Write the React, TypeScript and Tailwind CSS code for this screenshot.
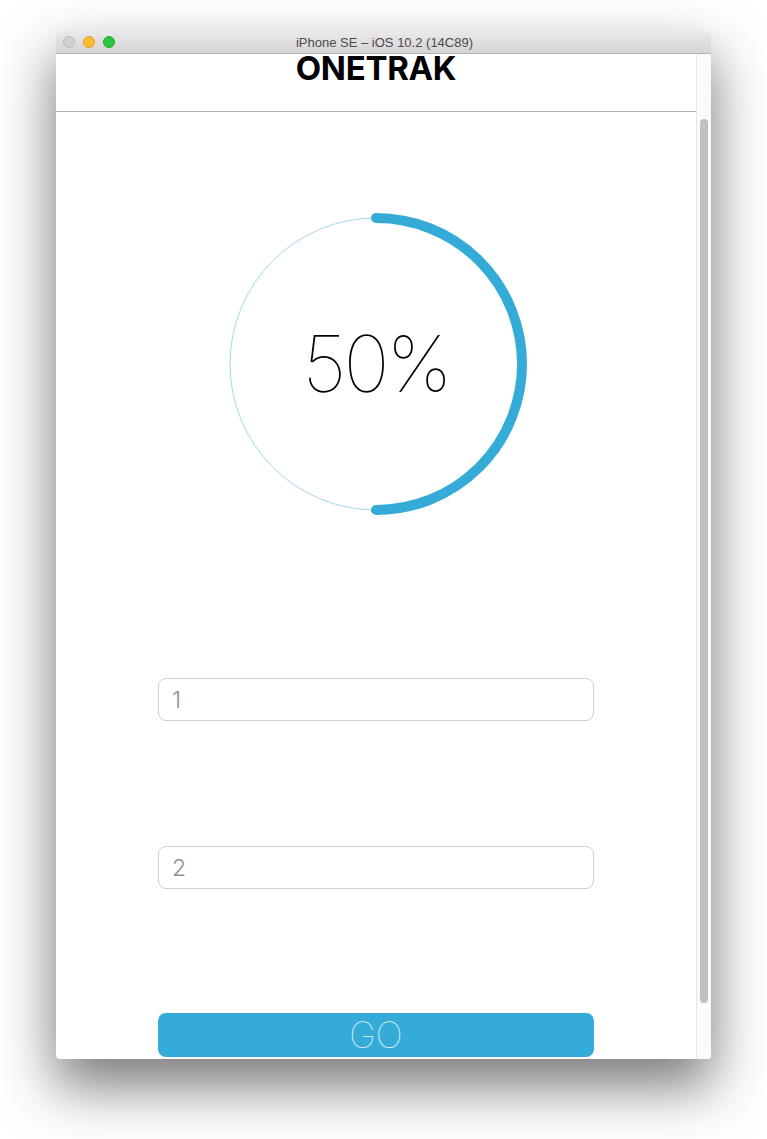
import React from 'react';

const ProgressRing: React.FC<{ percent: number }> = ({ percent }) => {
    const size = 310;
    const c = size / 2;
    const r = 146;
    const angle = (percent / 100) * Math.PI * 2;
    const endX = c + r * Math.sin(angle);
    const endY = c - r * Math.cos(angle);
    const large = percent > 50 ? 1 : 0;

    return (
        <div className="grid place-items-center mt-[97px]">
            <svg width={size} height={size} viewBox={`0 0 ${size} ${size}`} className="col-start-1 row-start-1">
                <circle cx={c} cy={c} r={r} fill="none" stroke="#a3d9ee" strokeWidth={1} />
                <path
                    d={`M ${c} ${c - r} A ${r} ${r} 0 ${large} 1 ${endX.toFixed(2)} ${endY.toFixed(2)}`}
                    fill="none"
                    stroke="#35acd8"
                    strokeWidth={10}
                    strokeLinecap="round"
                />
            </svg>
            <div className="col-start-1 row-start-1 font-['Inter',sans-serif] font-thin text-[78px] leading-none tracking-[-3px] text-black">
                {percent}%
            </div>
        </div>
    );
};

const TrafficLights: React.FC = () => (
    <div className="absolute left-[7px] top-0 h-full flex items-center gap-[8px]">
        <span className="w-[12px] h-[12px] rounded-full bg-[#d1d0d1] border border-[#bcbbbc]" />
        <span className="w-[12px] h-[12px] rounded-full bg-[#fdbc2f] border border-[#dfa023]" />
        <span className="w-[12px] h-[12px] rounded-full bg-[#29c740] border border-[#1ea932]" />
    </div>
);

export default function App() {
    return (
        <div className="w-[767px] h-[1139px] bg-white overflow-hidden pt-[31px] pl-[56px]">
            <div className="w-[655px] h-[1028px] flex flex-col rounded-t-[5px] rounded-b-[4px] overflow-hidden shadow-[0_26px_55px_2px_rgba(0,0,0,0.52)] bg-white">
                {/* title bar */}
                <div className="relative h-[23px] shrink-0 bg-gradient-to-b from-[#ebe9eb] to-[#d5d3d5] border-b border-[#b4b4b4] flex items-center justify-center">
                    <TrafficLights />
                    <span className="font-['Liberation_Sans',sans-serif] text-[13px] text-[#4a4a4a] leading-none pl-[2px]">
                        iPhone SE – iOS 10.2 (14C89)
                    </span>
                </div>

                <div className="flex flex-1 min-h-0">
                    <div className="flex-1 flex flex-col">
                        <header className="h-[58px] border-b border-[#b2b2b2] flex justify-center">
                            <h1 className="font-['Inter',sans-serif] font-bold text-[33px] leading-[28px] tracking-[-0.3px] text-black">
                                ONETRAK
                            </h1>
                        </header>

                        <ProgressRing percent={50} />

                        <div className="w-[436px] mx-auto mt-[159px] flex flex-col">
                            <input
                                placeholder="1"
                                className="h-[43px] rounded-[8px] border border-[#cfcfcf] pl-[13px] font-['Inter',sans-serif] font-light text-[23px] text-[#8f8f8f] placeholder:text-[#8f8f8f] outline-none"
                            />
                            <input
                                placeholder="2"
                                className="mt-[125px] h-[43px] rounded-[8px] border border-[#cfcfcf] pl-[13px] font-['Inter',sans-serif] font-light text-[23px] text-[#8f8f8f] placeholder:text-[#8f8f8f] outline-none"
                            />
                            <button className="mt-[124px] h-[44px] rounded-[8px] bg-[#35acd8] font-['Inter',sans-serif] font-thin text-[36px] leading-none text-white/85">
                                GO
                            </button>
                        </div>
                    </div>

                    {/* scrollbar */}
                    <div className="w-[15px] shrink-0 bg-[#fafafa] border-l border-[#e6e6e6] pt-[65px] pb-[56px] flex justify-center">
                        <div className="w-[8px] h-full rounded-full bg-[#c1c1c1]" />
                    </div>
                </div>
            </div>
        </div>
    );
}
